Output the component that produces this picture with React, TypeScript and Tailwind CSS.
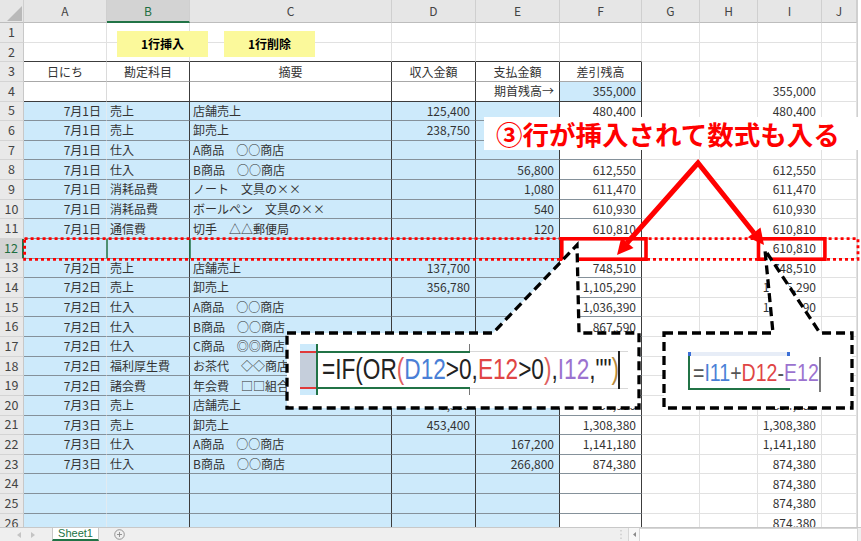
import React from 'react';

const COL_W = ['w-[83px]', 'w-[83px]', 'w-[202px]', 'w-[84px]', 'w-[84px]', 'w-[82px]', 'w-[58px]', 'w-[58px]', 'w-[64px]', 'flex-1'];
const COL_NAMES = ['A', 'B', 'C', 'D', 'E', 'F', 'G', 'H', 'I', 'J'];

// A, B, C, D, E, F, I  (values hidden under the notes are left blank)
const ROWS: string[][] = [
  ['', '', '', '', '', '', ''],
  ['', '', '', '', '', '', ''],
  ['日にち', '勘定科目', '摘要', '収入金額', '支払金額', '差引残高', ''],
  ['', '', '', '', '期首残高→', '355,000', '355,000'],
  ['7月1日', '売上', '店舗売上', '125,400', '', '480,400', '480,400'],
  ['7月1日', '売上', '卸売上', '238,750', '', '', ''],
  ['7月1日', '仕入', 'A商品　○○商店', '', '', '', ''],
  ['7月1日', '仕入', 'B商品　○○商店', '', '56,800', '612,550', '612,550'],
  ['7月1日', '消耗品費', 'ノート　文具の××', '', '1,080', '611,470', '611,470'],
  ['7月1日', '消耗品費', 'ボールペン　文具の××', '', '540', '610,930', '610,930'],
  ['7月1日', '通信費', '切手　△△郵便局', '', '120', '610,810', '610,810'],
  ['', '', '', '', '', '', '610,810'],
  ['7月2日', '売上', '店舗売上', '137,700', '', '748,510', '748,510'],
  ['7月2日', '売上', '卸売上', '356,780', '', '1,105,290', '1,105,290'],
  ['7月2日', '仕入', 'A商品　○○商店', '', '', '1,036,390', '1,036,390'],
  ['7月2日', '仕入', 'B商品　○○商店', '', '', '867,590', ''],
  ['7月2日', '仕入', 'C商品　◎◎商店', '', '', '', ''],
  ['7月2日', '福利厚生費', 'お茶代　◇◇商店', '', '', '', ''],
  ['7月2日', '諸会費', '年会費　□□組合', '', '', '', ''],
  ['7月3日', '売上', '店舗売上', '5,390', '', '854,980', '854,980'],
  ['7月3日', '売上', '卸売上', '453,400', '', '1,308,380', '1,308,380'],
  ['7月3日', '仕入', 'A商品　○○商店', '', '167,200', '1,141,180', '1,141,180'],
  ['7月3日', '仕入', 'B商品　○○商店', '', '266,800', '874,380', '874,380'],
  ['', '', '', '', '', '', '874,380'],
  ['', '', '', '', '', '', '874,380'],
  ['', '', '', '', '', '', '874,380'],
];

function cellCls(r: number, c: number): string {
  const parts: string[] = [];
  if (c >= 6) {
    parts.push('bg-white border-r-[#e1e1e1] border-b-[#e1e1e1]');
  } else if (r <= 2) {
    parts.push('bg-white border-r-[#e1e1e1]', r === 2 ? 'border-b-[#3c3c3c]' : 'border-b-[#e1e1e1]');
  } else {
    const blue = (r >= 5 && c <= 4) || (r === 4 && c === 5);
    parts.push(blue ? 'bg-[#cdeafb]' : 'bg-white');
    parts.push(c === 0 ? (r >= 5 ? 'border-r-[#e2ebf1]' : 'border-r-[#dadada]') : 'border-r-[#3c3c3c]');
    parts.push(r === 3 ? 'border-b-[#a8a8a8]' : r === 4 ? 'border-b-[#3c3c3c]' : 'border-b-[#85919a]');
  }
  if (r === 3) parts.push('justify-center');
  else if (c === 1 || c === 2) parts.push('justify-start pl-[3px]');
  else parts.push('justify-end pr-[5px]');
  return parts.join(' ');
}

function SheetRow({ r, vals }: { r: number; vals: string[] }) {
  const sel = r === 12;
  const cells = [vals[0], vals[1], vals[2], vals[3], vals[4], vals[5], '', '', vals[6], ''];
  return (
    <div className="flex h-[19.64px] shrink-0">
      <div
        className={`w-[24px] shrink-0 flex items-center justify-center text-[12.5px] border-b border-b-[#d4d4d4] ${
          sel ? 'bg-[#d3d3d3] text-[#1e6e41] border-r-2 border-r-[#217346]' : 'bg-[#e9e9e9] text-[#444] border-r border-r-[#c8c8c8]'
        }`}
      >
        {r}
      </div>
      {cells.map((t, c) => (
        <div
          key={c}
          className={`${COL_W[c]} shrink-0 h-full flex items-center border-r border-b overflow-hidden whitespace-nowrap text-[12px] leading-none text-[#333] ${cellCls(r, c)}`}
        >
          {t}
        </div>
      ))}
    </div>
  );
}

function FormulaIf() {
  // zoomed view of cell F12 with its formula
  return (
    <div className="absolute left-[300px] top-[344px] w-[328px] h-[51px] flex">
      <div className="w-[16px] flex flex-col bg-[#cdeafb]">
        <div className="h-[6.5px]" />
        <div className="flex-1 bg-[#c5cedb] border-y-2 border-[#e03a3a]" />
        <div className="h-[6.5px]" />
      </div>
      <div className="flex-1 flex flex-col border-l-2 border-[#217346]">
        <div className="h-[6.5px] flex">
          <div className="w-[152px] border-r border-[#777]" />
        </div>
        <div className="relative h-[38px] flex">
          <div className="w-[152px] border-y-2 border-[#217346]" />
          <div className="flex-1 border-y border-[#d8d8d8]" />
          <div className="absolute left-[4px] top-[4px] origin-left scale-x-[0.78] whitespace-nowrap text-[29px] leading-none text-[#222] font-['Liberation_Sans',sans-serif]">
            =IF(OR<span className="text-[#e06060]">(</span>
            <span className="text-[#4a7fd6]">D12</span>&gt;0,
            <span className="text-[#e04545]">E12</span>&gt;0<span className="text-[#e06060]">)</span>,
            <span className="text-[#9b72cf]">I12</span>,""<span className="text-[#b88a3c]">)</span>
          </div>
          <div className="absolute left-[300px] top-0 w-[1.5px] h-full bg-[#222]" />
        </div>
        <div className="flex-1 flex">
          <div className="w-[152px] border-r border-[#777]" />
        </div>
      </div>
    </div>
  );
}

function FormulaSum() {
  // zoomed view of cell I12 with its formula
  return (
    <div className="absolute left-[688px] top-[352px] w-[134px] h-[41px] flex flex-col">
      <div className="w-[102px] h-[4px] bg-[#e7edf7] border-x-[3px] border-[#3b6fd6]" />
      <div className="relative flex-1 flex">
        <div className="w-[102px] h-[34px] border-l-2 border-b-2 border-[#217346]" />
        <div className="absolute left-[5px] top-[6px] origin-left scale-x-[0.85] whitespace-nowrap text-[23px] leading-none text-[#555] font-['Liberation_Sans',sans-serif]">
          =<span className="text-[#4a7fd6]">I11</span>+<span className="text-[#e04545]">D12</span>-
          <span className="text-[#9b72cf]">E12</span>
        </div>
        <div className="absolute right-[1px] top-[1px] w-[2px] h-[35px] bg-[#7a7a7a]" />
      </div>
    </div>
  );
}

export default function App() {
  return (
    <div className="relative w-[861px] h-[541px] overflow-hidden bg-white font-['Noto_Sans_CJK_JP','Liberation_Sans',sans-serif]">
      <div className="flex flex-col h-full">
        <div className="flex flex-1 min-h-0">
          <div className="w-[858px] flex flex-col border-r border-r-[#d0d0d0] overflow-hidden">
            {/* column headers */}
            <div className="flex h-[23px] shrink-0">
              <div className="relative w-[24px] shrink-0 bg-[#e6e6e6] border-r border-b border-r-[#cfcfcf] border-b-[#bdbdbd]">
                <svg className="absolute right-[1px] bottom-[1px]" width="15" height="15" viewBox="0 0 15 15">
                  <path d="M15 0 L15 15 L0 15 Z" fill="#b9b9b9" />
                </svg>
              </div>
              {COL_NAMES.map((n, i) => (
                <div
                  key={n}
                  className={`${COL_W[i]} shrink-0 flex items-center justify-center text-[12px] border-r border-r-[#cfcfcf] ${
                    i === 1
                      ? 'bg-[#d3d3d3] text-[#1e6e41] border-b-2 border-b-[#217346]'
                      : 'bg-[#e6e6e6] text-[#444] border-b border-b-[#bdbdbd]'
                  }`}
                >
                  {n}
                </div>
              ))}
            </div>
            {ROWS.map((v, i) => (
              <SheetRow key={i} r={i + 1} vals={v} />
            ))}
          </div>
          <div className="flex-1 bg-white" />
        </div>

        {/* sheet tabs */}
        <div className="h-[14px] shrink-0 flex bg-[#efefef] border-t border-t-[#c8c8c8]">
          <div className="w-[52px] flex items-center justify-center gap-[10px]">
            <svg width="4" height="6" viewBox="0 0 4 6">
              <path d="M4 0 L0 3 L4 6 Z" fill="#c4c4c4" />
            </svg>
            <svg width="4" height="6" viewBox="0 0 4 6">
              <path d="M0 0 L4 3 L0 6 Z" fill="#c4c4c4" />
            </svg>
          </div>
          <div className="w-[47px] bg-white border-x border-x-[#c8c8c8] border-b-2 border-b-[#217346] text-[#217346] text-[11px] leading-none flex items-center justify-center font-['Liberation_Sans',sans-serif]">
            Sheet1
          </div>
          <div className="w-[40px] flex items-center justify-center">
            <svg width="11" height="11" viewBox="0 0 11 11">
              <circle cx="5.5" cy="5.5" r="4.8" fill="none" stroke="#8a8a8a" strokeWidth="0.9" />
              <path d="M5.5 3 V8 M3 5.5 H8" stroke="#8a8a8a" strokeWidth="0.9" />
            </svg>
          </div>
          <div className="flex-1" />
          <div className="w-[14px] flex items-center justify-center">
            <svg width="2" height="9" viewBox="0 0 2 9">
              <path d="M1 0 V1.5 M1 3.75 V5.25 M1 7.5 V9" stroke="#c4c4c4" strokeWidth="1.2" />
            </svg>
          </div>
          <div className="w-[12px] flex items-center justify-center bg-[#f7f7f7] border-x border-x-[#d6d6d6]">
            <svg width="3" height="5" viewBox="0 0 3 5">
              <path d="M3 0 L0 2.5 L3 5 Z" fill="#8a8a8a" />
            </svg>
          </div>
          <div className="w-[218px] bg-white border-t border-t-[#d6d6d6] border-r border-r-[#d6d6d6]" />
          <div className="w-[3px]" />
        </div>
      </div>

      {/* shape buttons on the sheet */}
      <div className="absolute left-[117px] top-[31px] flex gap-[16px]">
        <div className="w-[91px] h-[26px] bg-[#fbf99b] flex items-center justify-center text-[12px] font-bold text-black">1行挿入</div>
        <div className="w-[91px] h-[26px] bg-[#fbf99b] flex items-center justify-center text-[12px] font-bold text-black">1行削除</div>
      </div>

      {/* annotation drawing */}
      <svg className="absolute left-0 top-0 pointer-events-none" width="861" height="541" viewBox="0 0 861 541">
        <path d="M107 239 V258.6 M190 239 V258.6" stroke="#217346" strokeWidth="1.5" />
        <rect x="24.6" y="238.7" width="833.4" height="20.6" fill="none" stroke="#ff0000" strokeWidth="2.8" strokeDasharray="3 3" />
        <rect x="561.8" y="238.8" width="84.2" height="20.4" fill="none" stroke="#ff0000" strokeWidth="3.6" />
        <rect x="758.5" y="238.8" width="66.4" height="20.4" fill="none" stroke="#ff0000" strokeWidth="3.6" />
        <polygon
          points="287,333 493,333 577,245 579,333 639,333 639,408 287,408"
          fill="#ffffff"
          stroke="#000000"
          strokeWidth="3.3"
          strokeDasharray="9 5"
        />
        <polygon
          points="664,333 773,333 765,250 820,333 852,333 852,408 664,408"
          fill="#ffffff"
          stroke="#000000"
          strokeWidth="3.3"
          strokeDasharray="9 5"
        />
        <polyline points="627,243 698,163 754,233" fill="none" stroke="#ff0000" strokeWidth="5" strokeLinejoin="miter" />
        <polygon points="617,255 633.5,248 621.3,237.6" fill="#ff0000" />
        <polygon points="764,245 760.5,227.5 747.9,237.3" fill="#ff0000" />
      </svg>

      <FormulaIf />
      <FormulaSum />

      {/* heading */}
      <div className="absolute left-[484px] top-[117px] w-[377px] h-[33px] bg-white flex items-center pl-[12px] pt-[2px]">
        <span className="text-[26.5px] leading-none font-bold text-[#ff0000] whitespace-nowrap">③行が挿入されて数式も入る</span>
      </div>
    </div>
  );
}
